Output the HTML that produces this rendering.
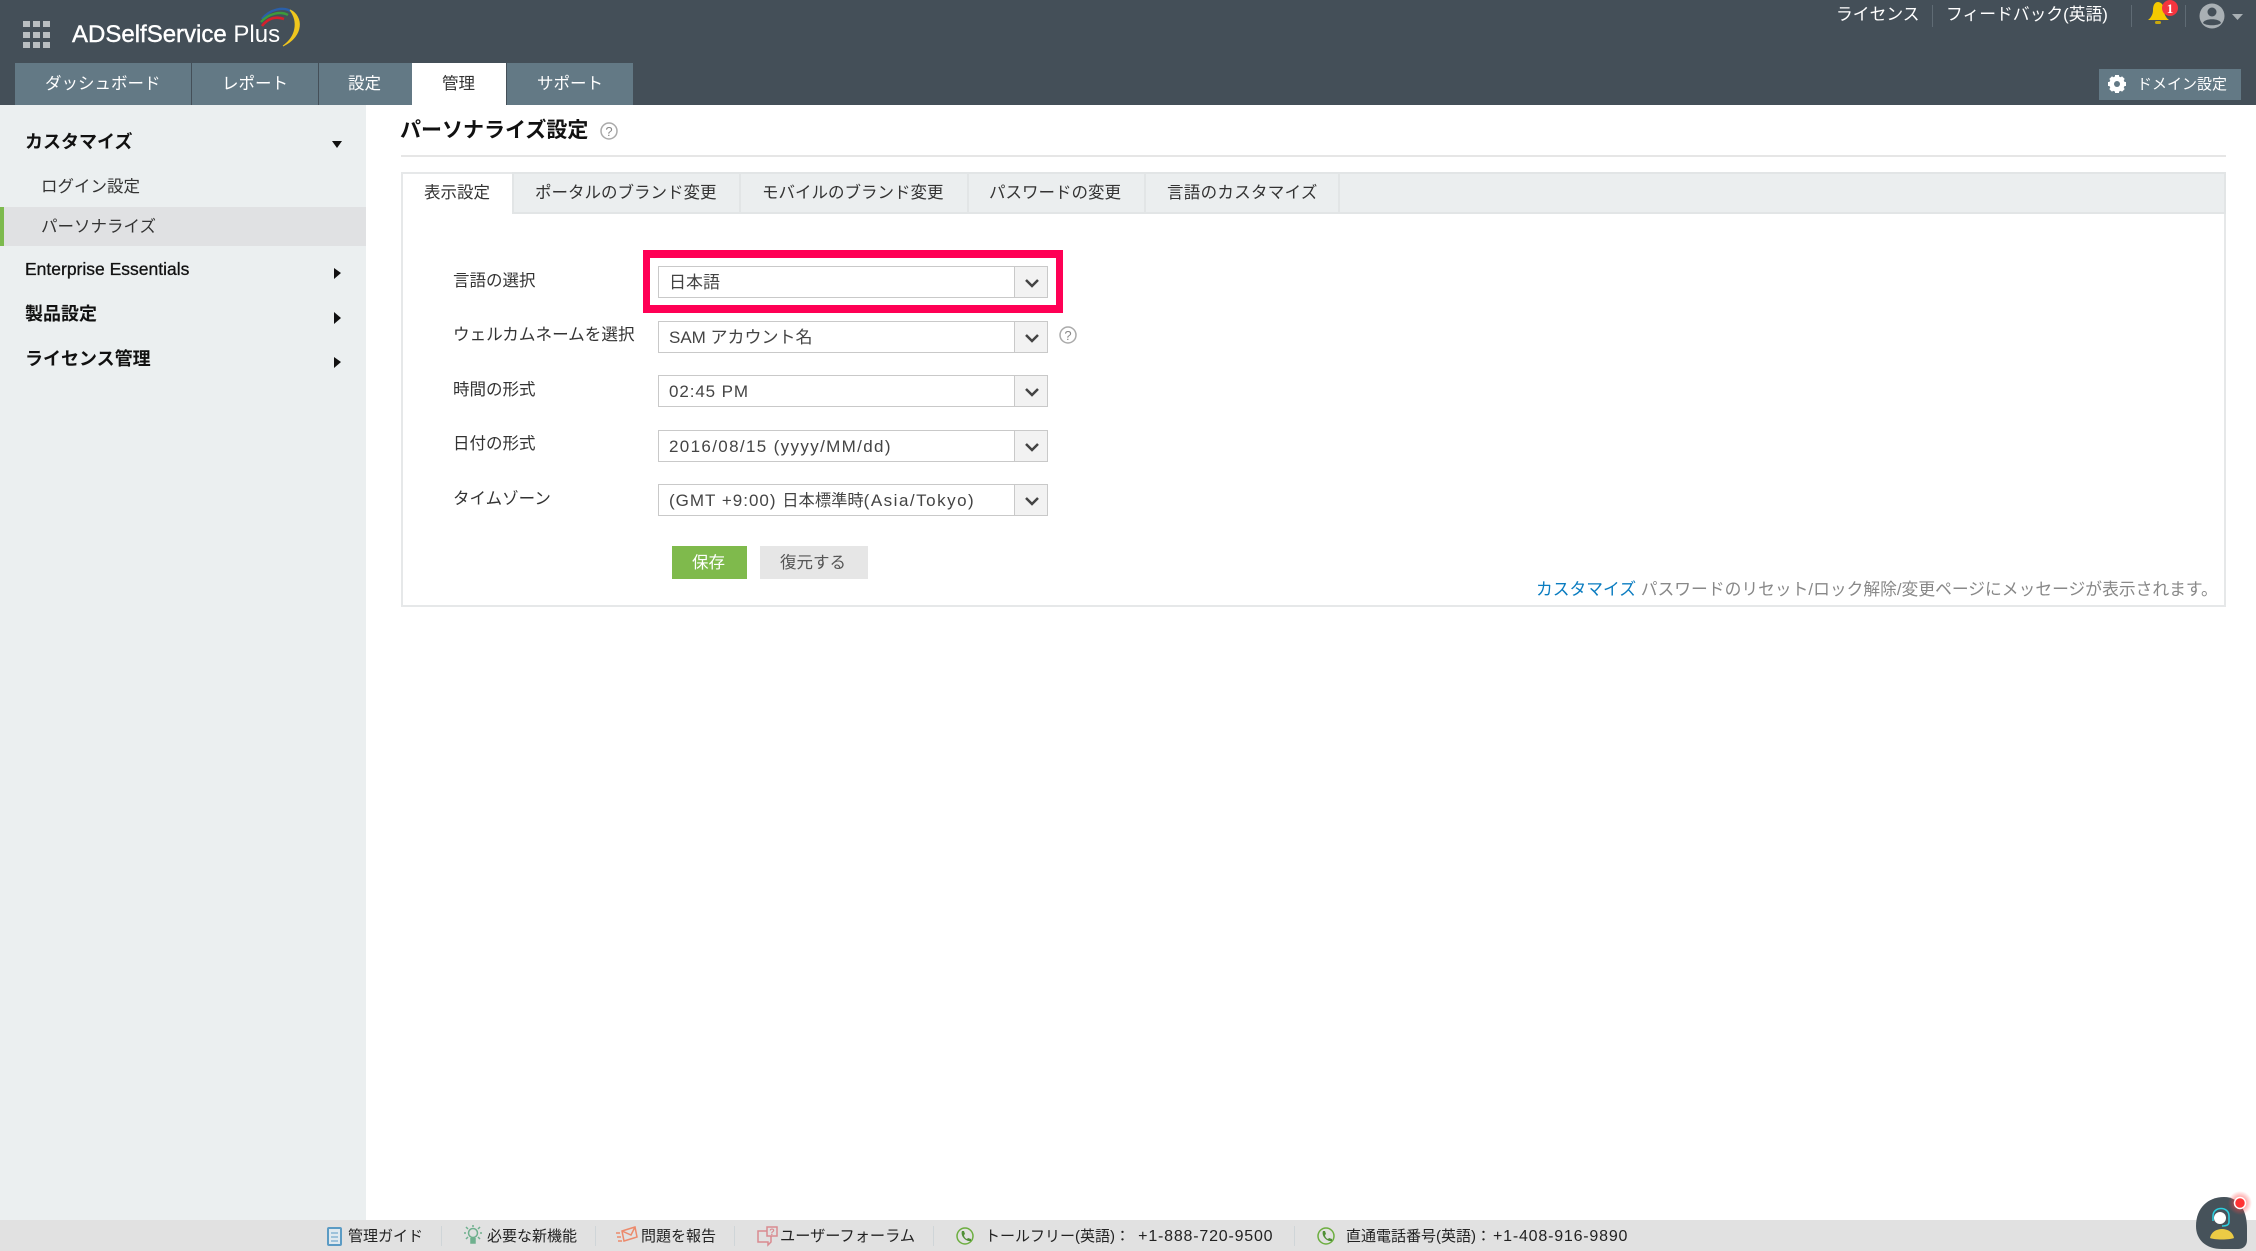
<!DOCTYPE html>
<html lang="ja"><head><meta charset="utf-8"><title>ADSelfService Plus</title>
<style>
*{box-sizing:border-box}
html,body{margin:0;padding:0;width:2256px;height:1251px;overflow:hidden;background:#fff}
body{position:relative;font-family:"Liberation Sans","Noto Sans CJK JP",sans-serif;font-size:16.5px;color:#3c3c3c}
.b{position:absolute}
.t{position:absolute;white-space:nowrap;line-height:24px;height:24px;margin-top:1px}
.tab{position:absolute;top:63px;height:42px;background:#637985}
.lab{left:454px;color:#333;margin-top:0}
.sel{position:absolute;left:658px;width:390px;height:32px;border:1px solid #c9c9c9;background:#fff}
.sel i{position:absolute;right:0;top:0;bottom:0;width:33px;background:#f2f2f2;border-left:1px solid #c9c9c9}
.sv{left:669px;color:#444;font-size:17px}
.st{color:#333}
.h{color:#fff}
.ts{position:absolute;top:172px;height:42px;width:2px;background:#e2e5e6}
.f{font-size:15px;color:#222}
.n{font-size:16px;letter-spacing:.8px}
.sep{position:absolute;top:1226px;width:1px;height:20px;background:#cfd5d8}
</style></head><body>
<div class="b" style="left:0;top:0;width:2256px;height:105px;background:#444f58"></div>
<div class="tab" style="left:15px;width:176px"></div>
<div class="tab" style="left:192px;width:126px"></div>
<div class="tab" style="left:319px;width:93px"></div>
<div class="tab" style="left:412px;width:94px;background:#fff"></div>
<div class="tab" style="left:507px;width:126px"></div>
<span class="t h" style="left:45px;top:71px">ダッシュボード</span>
<span class="t h" style="left:222px;top:71px">レポート</span>
<span class="t h" style="left:348px;top:71px">設定</span>
<span class="t" style="left:442px;top:71px;color:#333">管理</span>
<span class="t h" style="left:537px;top:71px">サポート</span>
<span class="t h" style="left:72px;top:18px;font-size:24px;line-height:32px;height:32px"><span style="-webkit-text-stroke:.4px #fff">ADSelfService</span> Plus</span>
<span class="t h" style="left:1836px;top:2px;font-size:16.8px">ライセンス</span>
<span class="t h" style="left:1946px;top:2px;font-size:16.8px">フィードバック(英語)</span>
<div class="b" style="left:1932px;top:5px;width:1px;height:22px;background:#5f6b74"></div>
<div class="b" style="left:2131px;top:5px;width:1px;height:22px;background:#5f6b74"></div>
<div class="b" style="left:2185px;top:5px;width:1px;height:22px;background:#5f6b74"></div>
<div class="b" style="left:2099px;top:69px;width:142px;height:31px;background:#637985"></div>
<span class="t h" style="left:2137px;top:72px;font-size:15px">ドメイン設定</span>

<div class="b" style="left:0;top:105px;width:366px;height:1115px;background:#ebeff0"></div>
<div class="b" style="left:0;top:207px;width:366px;height:39px;background:#e0e1e3"></div>
<div class="b" style="left:0;top:207px;width:4px;height:39px;background:#7dba4e"></div>
<span class="t" style="left:25px;top:129px;font-size:18px;font-weight:700;color:#111">カスタマイズ</span>
<span class="t st" style="left:41px;top:174px">ログイン設定</span>
<span class="t st" style="left:41px;top:214px">パーソナライズ</span>
<span class="t" style="left:25px;top:256px;font-size:17.5px;color:#111;-webkit-text-stroke:.3px #111">Enterprise Essentials</span>
<span class="t" style="left:25px;top:301px;font-size:18px;font-weight:700;color:#111">製品設定</span>
<span class="t" style="left:25px;top:346px;font-size:18px;font-weight:700;color:#111">ライセンス管理</span>

<span class="t" style="left:400px;top:118px;font-size:21px;font-weight:700;color:#111">パーソナライズ設定</span>
<div class="b" style="left:401px;top:155px;width:1825px;height:2px;background:#e6e6e6"></div>

<div class="b" style="left:401px;top:172px;width:1825px;height:435px;border:2px solid #e6e8e9;background:#fff"></div>
<div class="b" style="left:513px;top:172px;width:1713px;height:42px;background:#ebeeef;border-bottom:2px solid #e2e5e6;border-top:2px solid #e2e5e6;border-right:2px solid #e2e5e6"></div>
<div class="ts" style="left:512px"></div><div class="ts" style="left:739px"></div><div class="ts" style="left:967px"></div><div class="ts" style="left:1144px"></div><div class="ts" style="left:1338px"></div>
<span class="t st" style="left:424px;top:180px">表示設定</span>
<span class="t st" style="left:535px;top:180px">ポータルのブランド変更</span>
<span class="t st" style="left:762px;top:180px">モバイルのブランド変更</span>
<span class="t st" style="left:989px;top:180px">パスワードの変更</span>
<span class="t st" style="left:1167px;top:180px;letter-spacing:.3px">言語のカスタマイズ</span>

<span class="t lab" style="left:453px;top:269px">言語の選択</span>
<span class="t lab" style="left:453px;top:323px;font-size:16.6px">ウェルカムネームを選択</span>
<span class="t lab" style="left:453px;top:378px">時間の形式</span>
<span class="t lab" style="left:453px;top:432px">日付の形式</span>
<span class="t lab" style="left:453px;top:487px">タイムゾーン</span>

<div class="b" style="left:643px;top:250px;width:420px;height:63px;border:7px solid #ff0055;border-top-width:8px;border-bottom-width:8px"></div>
<div class="sel" style="top:266px"><i></i></div>
<div class="sel" style="top:321px"><i></i></div>
<div class="sel" style="top:375px"><i></i></div>
<div class="sel" style="top:430px"><i></i></div>
<div class="sel" style="top:484px"><i></i></div>
<span class="t sv" style="top:270px">日本語</span>
<span class="t sv" style="top:325px">SAM アカウント名</span>
<span class="t sv" style="top:379px;letter-spacing:.9px">02:45 PM</span>
<span class="t sv" style="top:434px;letter-spacing:1.35px">2016/08/15 (yyyy/MM/dd)</span>
<span class="t sv" style="top:488px"><span style="letter-spacing:1px">(GMT +9:00) </span><span style="font-size:16.3px">日本標準時</span><span style="letter-spacing:1.5px">(Asia/Tokyo)</span></span>

<div class="b" style="left:672px;top:546px;width:75px;height:33px;background:#7fba4c"></div>
<div class="b" style="left:760px;top:546px;width:108px;height:33px;background:#e6e6e6"></div>
<span class="t h" style="left:692px;top:550px">保存</span>
<span class="t" style="left:780px;top:550px;color:#555">復元する</span>
<span class="t" style="left:1536px;top:577px;font-size:16.78px;color:#888"><span style="color:#0a7cc0">カスタマイズ</span> パスワードのリセット/ロック解除/変更ページにメッセージが表示されます。</span>

<div class="b" style="left:0;top:1220px;width:2256px;height:31px;background:#e1e1e1"></div>
<span class="t f" style="left:348px;top:1224px">管理ガイド</span>
<span class="t f" style="left:487px;top:1224px">必要な新機能</span>
<span class="t f" style="left:641px;top:1224px">問題を報告</span>
<span class="t f" style="left:780px;top:1224px;font-size:15.2px">ユーザーフォーラム</span>
<span class="t f" style="left:985px;top:1224px">トールフリー(英語)： <span class="n" style="margin-left:4px">+1-888-720-9500</span></span>
<span class="t f" style="left:1346px;top:1224px">直通電話番号(英語)：<span class="n" style="margin-left:2px">+1-408-916-9890</span></span>
<div class="sep" style="left:441px"></div><div class="sep" style="left:595px"></div><div class="sep" style="left:734px"></div><div class="sep" style="left:933px"></div><div class="sep" style="left:1294px"></div>

<svg class="b" style="left:0;top:0" width="2256" height="1251" viewBox="0 0 2256 1251" xmlns="http://www.w3.org/2000/svg">
<defs><radialGradient id="gl"><stop offset=".4" stop-color="#f44" stop-opacity=".55"/><stop offset="1" stop-color="#f44" stop-opacity="0"/></radialGradient></defs>
<!-- grid -->
<g fill="#b9bec1">
<rect x="23" y="21" width="7" height="6"/><rect x="33" y="21" width="7" height="6"/><rect x="43" y="21" width="7" height="6"/>
<rect x="23" y="32" width="7" height="6"/><rect x="33" y="32" width="7" height="6"/><rect x="43" y="32" width="7" height="6"/>
<rect x="23" y="42" width="7" height="6"/><rect x="33" y="42" width="7" height="6"/><rect x="43" y="42" width="7" height="6"/>
</g>
<!-- logo swoosh -->
<path d="M262 19C270 9 284 6 292 12" fill="none" stroke="#2a5fa8" stroke-width="2.4"/>
<path d="M261 22C269 13 281 11 288 15" fill="none" stroke="#3c9a3c" stroke-width="2.4"/>
<path d="M262 26C268 18 276 16 284 19" fill="none" stroke="#d6202c" stroke-width="2.6"/>
<path d="M290 10C303 16 304 36 283 46C296 37 299 22 290 10Z" fill="#f0c61e" stroke="#f0c61e" stroke-width="1"/>
<!-- bell -->
<path d="M2148 20C2152 17 2153 13 2153 10C2153 5 2155 2 2158 2C2161 2 2164 5 2164 10C2164 13 2165 17 2169 20Z" fill="#f4c900"/>
<rect x="2155" y="21" width="6" height="3" rx="1.5" fill="#c9a80c"/>
<circle cx="2170" cy="8" r="8" fill="#f4353f"/>
<text x="2170" y="13" text-anchor="middle" font-family="Liberation Serif" font-weight="700" font-size="13" fill="#fff">1</text>
<!-- avatar -->
<circle cx="2212" cy="16" r="12.5" fill="#a9b0b4"/>
<circle cx="2212" cy="12" r="4.5" fill="#444f58"/>
<path d="M2203 23C2204 18 2220 18 2221 23C2218 26 2206 26 2203 23Z" fill="#444f58"/>
<path d="M2232 14H2243L2237.500 20Z" fill="#a9b0b4"/>
<!-- gear -->
<g transform="translate(2117 84)" fill="#fff"><circle r="5.500" fill="none" stroke="#fff" stroke-width="4.500"/>
<rect x="-2" y="-9" width="4" height="18"/><rect x="-2" y="-9" width="4" height="18" transform="rotate(45)"/><rect x="-2" y="-9" width="4" height="18" transform="rotate(90)"/><rect x="-2" y="-9" width="4" height="18" transform="rotate(135)"/>
<circle r="3" fill="#637985"/></g>
<!-- sidebar arrows -->
<g fill="#111"><path d="M332 141H342L337 148Z"/><path d="M334 268L341 273L334 279Z"/><path d="M334 312L341 318L334 324Z"/><path d="M334 357L341 362L334 368Z"/></g>
<!-- help -->
<g font-family="Liberation Sans" font-size="13" fill="#888" text-anchor="middle">
<circle cx="609" cy="131" r="8" fill="none" stroke="#aaa" stroke-width="1.500"/><text x="609" y="136">?</text>
<circle cx="1068" cy="335" r="8" fill="none" stroke="#aaa" stroke-width="1.500"/><text x="1068" y="340">?</text></g>
<!-- chevrons -->
<g fill="none" stroke="#444" stroke-width="2.500">
<path d="M1026 280L1032 286L1038 280"/><path d="M1026 335L1032 341L1038 335"/><path d="M1026 389L1032 395L1038 389"/><path d="M1026 444L1032 450L1038 444"/><path d="M1026 498L1032 504L1038 498"/></g>
<!-- footer icons -->
<g fill="none" stroke="#5b9bc4" stroke-width="2"><rect x="328" y="1228" width="13" height="17" rx="1" fill="#dfe9ef"/><path d="M331 1233H338M331 1237H338M331 1241H338" stroke-width="1"/></g>
<g fill="none" stroke="#6fb08e" stroke-width="1.500"><circle cx="473" cy="1233" r="4.500"/><path d="M471 1238V1243H475V1238" fill="#6fb08e"/><path d="M473 1225V1227M466 1227L468 1229M480 1227L478 1229M464 1233H466M480 1233H482M466 1239L468 1237M480 1239L478 1237"/></g>
<g fill="none" stroke="#ec8a6c" stroke-width="1.500"><path d="M622 1231L635 1227L637 1237L624 1241Z"/><path d="M622 1231L631 1235L635 1227M616 1233H620M617 1237H621M618 1241H622"/></g>
<g fill="none" stroke="#d98a90" stroke-width="1.500"><rect x="767" y="1227" width="10" height="9"/><path d="M767 1231H758V1242H768V1245L771 1242V1236"/></g>
<text x="772" y="1235" font-family="Liberation Sans" font-size="9" font-weight="700" fill="#d98a90" text-anchor="middle">?</text>
<g fill="none" stroke="#6cae3f" stroke-width="1.500"><circle cx="965" cy="1236" r="8"/><circle cx="1326" cy="1236" r="8"/></g>
<g fill="#4f8f36"><path d="M962 1231L964 1231L965 1234L964 1235C964 1237 966 1239 967 1239L968 1238L971 1239V1241C966 1242 960 1236 962 1231Z"/><path d="M1323 1231L1325 1231L1326 1234L1325 1235C1325 1237 1327 1239 1328 1239L1329 1238L1332 1239V1241C1327 1242 1321 1236 1323 1231Z"/></g>
<!-- chat widget -->
<path d="M2196 1226C2196 1208 2208 1197 2224 1197C2240 1197 2247 1212 2247 1228V1240C2247 1246 2243 1249 2238 1249H2222C2206 1249 2196 1240 2196 1226Z" fill="#46525a"/>
<circle cx="2240" cy="1203" r="12" fill="url(#gl)"/>
<circle cx="2240" cy="1203" r="5.500" fill="#f33" stroke="#fff" stroke-width="1.500"/>
<circle cx="2220" cy="1218" r="6" fill="#fff"/>
<path d="M2213 1221V1216C2213 1206 2229 1206 2229 1216V1222C2229 1225 2226 1226 2222 1226" fill="none" stroke="#2bd0e0" stroke-width="1.500"/>
<path d="M2210 1238C2212 1226 2232 1226 2234 1238C2230 1240 2214 1240 2210 1238Z" fill="#eccb45"/>
</svg>
</body></html>
